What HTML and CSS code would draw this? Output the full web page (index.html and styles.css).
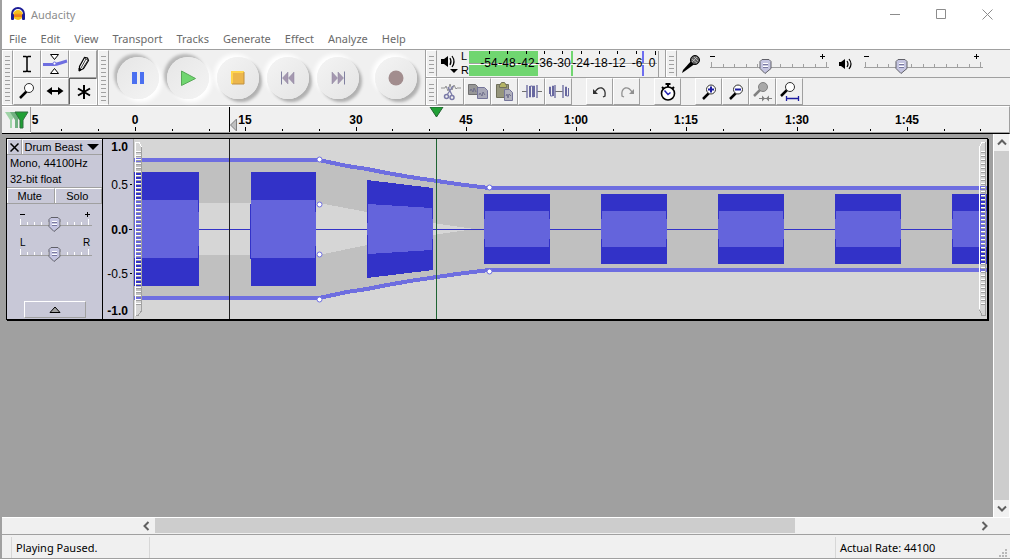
FILE: index.html
```html
<!DOCTYPE html>
<html lang="en">

<head>
    <meta charset="UTF-8">
    <meta name="viewport" content="width=device-width, initial-scale=1.0">
    <title>Audacity</title>
    <link rel="stylesheet" href="styles.css">
</head>

<body>
    <header class="titlebar">
        <svg class="logo" width="16" height="16" viewBox="0 0 16 16">
            <circle cx="8" cy="9" r="5" fill="#f7c21c" />
            <path d="M3 9l1-1 1 1 1-2 1 2 1-2 1 2 1-2 1 2 1-1 1 1v2H3z" fill="#f0801c" />
            <path d="M2 10V8a6 6 0 0 1 12 0v2" fill="none" stroke="#1c1c96" stroke-width="2" />
            <rect x="1" y="8" width="3" height="6" rx="1" fill="#1c1c96" />
            <rect x="12" y="8" width="3" height="6" rx="1" fill="#1c1c96" />
        </svg>
        <span class="title">Audacity</span>
        <div class="window-buttons">
            <button aria-label="Minimize"><svg width="11" height="11"><path d="M0 5.500h10" /></svg></button>
            <button aria-label="Maximize"><svg width="11" height="11"><path d="M.5.5h9v9h-9z" /></svg></button>
            <button aria-label="Close"><svg width="11" height="11"><path d="M.5.5l10 10M10.500.5l-10 10" /></svg></button>
        </div>
    </header>

    <nav class="menu">
        <a href="#">File</a>
        <a href="#">Edit</a>
        <a href="#">View</a>
        <a href="#">Transport</a>
        <a href="#">Tracks</a>
        <a href="#">Generate</a>
        <a href="#">Effect</a>
        <a href="#">Analyze</a>
        <a href="#">Help</a>
    </nav>

    <div class="toolbars">
        <!-- Tools -->
        <div class="toolbar tools">
            <div class="grabber"></div>
            <div class="tool-grid">
                <button class="tool" aria-label="Selection tool"><svg width="20" height="20"><path d="M6 2.500h3l1 1 1-1h3M6 17.500h3l1-1 1 1h3M10 3v14" fill="none" stroke="#000" stroke-width="1.500" /></svg></button>
                <button class="tool" aria-label="Envelope tool"><svg width="26" height="22"><path d="M1 11.500h10c5 0 8-2 14-3.500" fill="none" stroke="#6e6ee0" stroke-width="3" /><path d="M8.500 1.500h8l-4 5zM8.500 20.500h8l-4-5z" fill="#fff" stroke="#000" /><circle cx="12.500" cy="10.500" r="1.500" fill="#fff" stroke="#6e6ee0" /></svg></button>
                <button class="tool" aria-label="Draw tool"><svg width="20" height="20"><path d="M6.500 16.500v-4l5-9 3 .5 1 2.500-5 8z" fill="#fff" stroke="#000" stroke-width="1.200" /><path d="M6 17v-3l2.500 1.500z" stroke="#000" /><path d="M8 14l5-9M10 14l5-8M11 4l4 2" stroke="#404040" /></svg></button>
                <button class="tool" aria-label="Zoom tool"><svg width="20" height="20"><path d="M3 17l7-7" stroke="#000" stroke-width="2.500" /><circle cx="12" cy="7" r="4.500" fill="#fff" stroke="#303030" /></svg></button>
                <button class="tool" aria-label="Time shift tool"><svg width="20" height="20"><path d="M4 10h12" stroke="#000" stroke-width="2" /><path d="M1.500 10L7 6v8zM18.500 10L13 6v8z" /></svg></button>
                <button class="tool pressed" aria-label="Multi tool"><svg width="22" height="22"><path d="M12 5v14M6 8.500l12 7M6 15.500l12-7" stroke="#000" stroke-width="2" /></svg></button>
            </div>
        </div>

        <!-- Transport -->
        <div class="toolbar transport">
            <div class="grabber"></div>
            <div class="transport-buttons">
                <button class="round down" aria-label="Pause"><svg width="16" height="16"><path d="M2 2h5v12H2zM10 2h4v12h-4z" fill="#4b70f0" /></svg></button>
                <button class="round down" aria-label="Play"><svg width="16" height="16"><path d="M1.500 1l14 7.500-14 7z" fill="#70d670" stroke="#58a858" /></svg></button>
                <button class="round" aria-label="Stop"><svg width="16" height="16"><path d="M2 2h12v12H2z" fill="#ecb64c" /><path d="M2 14V2h12" fill="none" stroke="#ffd54d" stroke-width="2" /><path d="M14 2v12H2" fill="none" stroke="#c09040" /></svg></button>
                <button class="round" aria-label="Skip to start"><svg width="16" height="16"><path d="M8 2v12L2.500 8zM14 2v12L8.500 8z" fill="#a598b0" stroke="#8d86a0" stroke-width=".5" /><path d="M1.500 1.500v13" stroke="#8080a0" /></svg></button>
                <button class="round" aria-label="Skip to end"><svg width="16" height="16"><path d="M2 2v12l5.500-6zM8 2v12l5.500-6z" fill="#a598b0" stroke="#8d86a0" stroke-width=".5" /><path d="M14.500 1.500v13" stroke="#8080a0" /></svg></button>
                <button class="round record" aria-label="Record"><svg width="16" height="16"><circle cx="8" cy="8" r="7.500" fill="#a28d8e" /></svg></button>
            </div>
        </div>

        <div class="stack">
            <div class="stack-row">
                <!-- Meter -->
                <div class="toolbar meter">
                    <div class="grabber"></div>
                    <button class="meter-menu" aria-label="Playback meter">
                        <svg width="18" height="22"><path d="M0 6h3l4-3v11l-4-3H0z" /><path d="M9 5q2 3.500 0 7M11 3q4 5.500 0 11" fill="none" stroke="#000" stroke-width="1.200" /><path d="M9 16h8l-4 4z" /></svg>
                    </button>
                    <div class="channels"><span>L</span><span>R</span></div>
                    <svg class="meter-scale" width="192" height="26">
                        <rect width="69" height="25" fill="#70d670" />
                        <path d="M103 0v25" stroke="#70d670" stroke-width="2" />
                        <path d="M174 0v25" stroke="#6e6ef0" stroke-width="2" />
                        <path d="M0 12.500h188" stroke="#a0a0a0" />
                        <path d="M0 13.500h188" stroke="#fff" />
                        <path d="M20.500 0v3M38.500 0v3M57.500 0v3M75.500 0v3M93.500 0v3M112.500 0v3M130.500 0v3M148.500 0v3M167.500 0v3M186.500 0v4" stroke="#000" />
                        <path d="M189.500 0v26" stroke="#a0a0a0" />
                        <g class="scale-text">
                            <text x="20" y="16">-54</text>
                            <text x="38" y="16">-48</text>
                            <text x="57" y="16">-42</text>
                            <text x="75" y="16">-36</text>
                            <text x="93" y="16">-30</text>
                            <text x="112" y="16">-24</text>
                            <text x="130" y="16">-18</text>
                            <text x="148" y="16">-12</text>
                            <text x="168" y="16">-6</text>
                            <text x="183" y="16">0</text>
                        </g>
                    </svg>
                </div>

                <!-- Mixer -->
                <div class="toolbar mixer">
                    <div class="grabber"></div>
                    <label class="mixer-icon" for="recVolume"><svg width="20" height="20"><path d="M1 19l1-3 9-10 4 3-11 8z" /><circle cx="14" cy="6" r="4.500" fill="#606060" stroke="#000" /><path d="M11 5l5 4M13 3l4 4M11 8l5-5" stroke="#d0d0d0" stroke-width=".7" /></svg></label>
                    <div class="slider">
                        <svg width="128" height="25"><path d="M5 6.500h5M115 6.500h5M117.500 4v5" stroke="#000" /><path d="M5 17.500h119M6.500 12v5M121.500 12v5M18.500 14v3M29.500 14v3M41.500 14v3M52.500 14v3M64.500 14v3M75.500 14v3M87.500 14v3M98.500 14v3M110.500 14v3" stroke="#a0a0a0" /></svg>
                        <input type="range" id="recVolume" min="0" max="100" value="47">
                    </div>
                    <label class="mixer-icon speaker" for="playVolume"><svg width="14" height="14"><path d="M0 5h2l4-3v10L2 9H0z" /><path d="M8 4q2 3 0 6M10 2q4 5 0 10" fill="none" stroke="#000" stroke-width="1.200" /></svg></label>
                    <div class="slider">
                        <svg width="128" height="25"><path d="M5 6.500h5M115 6.500h5M117.500 4v5" stroke="#000" /><path d="M5 17.500h119M6.500 12v5M121.500 12v5M18.500 14v3M29.500 14v3M41.500 14v3M52.500 14v3M64.500 14v3M75.500 14v3M87.500 14v3M98.500 14v3M110.500 14v3" stroke="#a0a0a0" /></svg>
                        <input type="range" id="playVolume" min="0" max="100" value="31">
                    </div>
                </div>
            </div>

            <!-- Edit -->
            <div class="toolbar edit">
                <div class="grabber"></div>
                <div class="group">
                    <button class="tool" aria-label="Cut"><svg width="22" height="20"><path d="M1 6h4l1-2 2 5 2-7 2 6 2-5 2 4 1-1h4" fill="none" stroke="#909090" /><path d="M7 13l6-9M12 13L8 5" stroke="#7a7aa8" stroke-width="1.300" /><circle cx="6.500" cy="14.500" r="2" fill="none" stroke="#7a7aa8" stroke-width="1.500" /><circle cx="12" cy="15.500" r="2" fill="none" stroke="#7a7aa8" stroke-width="1.500" /></svg></button>
                    <button class="tool" aria-label="Copy"><svg width="22" height="20"><path d="M1.500 2.500h7l2 2v8h-9z" fill="#969696" stroke="#707070" /><path d="M10.500 5.500h7l3 3v8h-10z" fill="#a8a8b8" stroke="#74749a" /><path d="M3 9l1-2 2 3 1-4 2 4M12 13l1-2 2 3 1-4 2 3" fill="none" stroke="#70708c" /></svg></button>
                    <button class="tool" aria-label="Paste"><svg width="22" height="20"><path d="M2.500 2.500h12v13h-12z" fill="#96967c" stroke="#70705a" /><path d="M5.500 3.500l2-3h3l2 3v2h-7z" fill="#b4b464" stroke="#70705a" /><path d="M10.500 7.500h5l3 3v8h-8z" fill="#b0b0bc" stroke="#74749a" /><path d="M12 14l1-2 1 4 1-4 2 2" fill="none" stroke="#70708c" /></svg></button>
                    <button class="tool" aria-label="Trim"><svg width="22" height="20"><path d="M1 9.500h5M16 9.500h5" stroke="#707070" /><path d="M6 3v13M16 3v13" stroke="#7a7aa8" stroke-width="1.500" /><path d="M8.500 4v11l1 0V4h2v11h1V4h1v11" fill="none" stroke="#6868a0" /></svg></button>
                    <button class="tool" aria-label="Silence"><svg width="22" height="20"><path d="M7 9.500h8" stroke="#707070" /><path d="M7 3v13M15 3v13" stroke="#7a7aa8" stroke-width="1.500" /><path d="M1.500 12V5h1v9h2V4h1v10M17.500 14V5h1v9h2V6" fill="none" stroke="#6868a0" /></svg></button>
                </div>
                <div class="group">
                    <button class="tool" aria-label="Undo"><svg width="20" height="20"><path d="M5 10q3-5 7-4 4 2 3 8l-2 1" fill="none" stroke="#303030" stroke-width="1.300" /><path d="M3 7v5h5z" fill="#303030" /></svg></button>
                    <button class="tool" aria-label="Redo"><svg width="20" height="20"><path d="M15 10q-3-5-7-4-4 2-3 8l2 1" fill="none" stroke="#909090" stroke-width="1.300" /><path d="M17 7v5h-5z" fill="#909090" /></svg></button>
                </div>
                <div class="group">
                    <button class="tool" aria-label="Timer record"><svg width="20" height="20"><circle cx="10" cy="11.500" r="6.500" fill="#fff" stroke="#000" stroke-width="1.600" /><path d="M7.500 2h5M10 2v3M4 5l2 2M16 5l-2 2" stroke="#000" stroke-width="2" /><path d="M6.500 8.500l3.500 4 2.500-2" fill="none" stroke="#2020b0" stroke-width="1.500" /></svg></button>
                </div>
                <div class="group">
                    <button class="tool" aria-label="Zoom in"><svg width="20" height="20"><path d="M4 17l6-6" stroke="#000" stroke-width="2.500" /><circle cx="12" cy="7.500" r="4.500" fill="#fff" stroke="#303030" /><path d="M9 7.500h6M12 4.500v6" stroke="#1c1ca0" stroke-width="2" /></svg></button>
                    <button class="tool" aria-label="Zoom out"><svg width="20" height="20"><path d="M4 17l6-6" stroke="#000" stroke-width="2.500" /><circle cx="12" cy="7.500" r="4.500" fill="#fff" stroke="#303030" /><path d="M9 7.500h6" stroke="#1c1ca0" stroke-width="2" /></svg></button>
                    <button class="tool" aria-label="Fit selection"><svg width="20" height="22"><path d="M1 15l6-6" stroke="#808080" stroke-width="2.500" /><circle cx="10" cy="6" r="4.500" fill="#a8a8a8" stroke="#808080" /><path d="M6 17.500h13" stroke="#808080" /><path d="M12 17.500l-3-3v6zM13 17.500l3-3v6z" fill="#808080" /></svg></button>
                    <button class="tool" aria-label="Fit project"><svg width="20" height="22"><path d="M1 15l6-6" stroke="#000" stroke-width="2.500" /><circle cx="10" cy="6" r="4.500" fill="#fff" stroke="#303030" /><path d="M6.500 15v5M18.500 15v5M7 17.500h11" stroke="#1c1ca0" stroke-width="1.300" /></svg></button>
                </div>
            </div>
        </div>
    </div>

    <!-- Timeline -->
    <div class="timeline">
        <button class="pin" aria-label="Pin play head"><svg width="25" height="18"><path d="M1 1h12l-5 8v8H6V9z" fill="#a0d4a8" /><path d="M6 1h13l-5 8v8h-3V9z" fill="#70b080" /><path d="M11 1h13l-5 8v8h-3V9z" fill="#20a035" stroke="#307040" /></svg></button>
        <svg class="ruler" width="100%" height="26">
            <g class="ruler-text">
                <text x="4" y="17">5</text>
                <text x="104" y="17">0</text>
                <text x="214" y="17">15</text>
                <text x="325" y="17">30</text>
                <text x="435" y="17">45</text>
                <text x="545" y="17">1:00</text>
                <text x="655" y="17">1:15</text>
                <text x="766" y="17">1:30</text>
                <text x="876" y="17">1:45</text>
            </g>
            <path d="M104.500 20v4M214.500 20v4M325.500 20v4M435.500 20v4M545.500 20v4M655.500 20v4M766.500 20v4M876.500 20v4" stroke="#000" />
            <path d="M30.500 22v2M67.500 22v2M141.500 22v2M178.500 22v2M251.500 22v2M288.500 22v2M361.500 22v2M398.500 22v2M472.500 22v2M508.500 22v2M582.500 22v2M619.500 22v2M692.500 22v2M729.500 22v2M802.500 22v2M839.500 22v2M913.500 22v2M949.500 22v2" stroke="#000" />
            <path d="M198.500 0v26" stroke="#000" />
            <path d="M205.500 12v12l-6-6z" fill="#c0c0c0" stroke="#808080" />
            <path d="M399 0h13l-6.500 10z" fill="#20a035" stroke="#206030" />
        </svg>
    </div>

    <main class="workspace">
        <div class="track-area">
            <section class="track">
                <div class="panel">
                    <div class="panel-title">
                        <button class="close" aria-label="Close track"><svg width="9" height="9"><path d="M.5.5l8 8M8.500.5l-8 8" stroke="#000" stroke-width="1.500" /></svg></button>
                        <button class="name">Drum Beast<svg width="12" height="6"><path d="M0 0h12L6 6z" /></svg></button>
                    </div>
                    <div class="info">Mono, 44100Hz<br>32-bit float</div>
                    <div class="mute-solo"><button>Mute</button><button>Solo</button></div>
                    <div class="sliders">
                        <div class="slider small">
                            <svg width="78" height="26"><path d="M5 6.500h5M70 6.500h5M72.500 4v5" stroke="#000" /><path d="M5 17.500h72" stroke="#a0a0a0" /><path d="M5.500 11v6M12.500 14v3M19.500 14v3M26.500 14v3M33.500 14v3M45.500 14v3M52.500 14v3M59.500 14v3M66.500 14v3M73.500 11v6" stroke="#fff" /></svg>
                            <input type="range" aria-label="Gain" min="-36" max="36" value="0">
                        </div>
                        <div class="slider small">
                            <svg width="78" height="30"><g class="pan-text"><text x="5" y="12">L</text><text x="68" y="12">R</text></g><path d="M5 21.500h72" stroke="#a0a0a0" /><path d="M5.500 15v6M12.500 18v3M19.500 18v3M26.500 18v3M33.500 18v3M45.500 18v3M52.500 18v3M59.500 18v3M66.500 18v3M73.500 15v6" stroke="#fff" /></svg>
                            <input class="pan" type="range" aria-label="Pan" min="-100" max="100" value="0">
                        </div>
                    </div>
                    <button class="collapse" aria-label="Collapse track"><svg width="12" height="7"><path d="M1 6.500h10L6 1z" fill="#a0a0a0" stroke="#000" /></svg></button>
                </div>
                <svg class="vruler" width="31" height="180">
                    <text class="strong" x="25" y="12">1.0</text>
                    <text x="25" y="50">0.5</text>
                    <text class="strong" x="25" y="95">0.0</text>
                    <text x="25" y="139">-0.5</text>
                    <text class="strong" x="25" y="176">-1.0</text>
                    <path d="M27 45.500h2M26 90.500h3M27 134.500h2" stroke="#000" />
                    <path d="M30.500 0v180" stroke="#a0a0a0" />
                </svg>
                <svg class="wave" width="100%" height="180" shape-rendering="crispEdges">
                    <defs>
                        <pattern id="ribs" width="5" height="4" patternUnits="userSpaceOnUse">
                            <rect width="5" height="1" fill="#fff" />
                            <rect y="1" width="5" height="1" fill="#a0a0a0" />
                        </pattern>
                    </defs>
                    <!-- area inside the envelope -->
                    <path d="M0 21H185L213 27 233 30 253 34 276 38 303 42 323 45 355 49H1200V131H355L323 135 303 138 276 142 253 146 233 150 213 153 185 159H0z" fill="#c0c0c0" />
                    <path d="M0 64H185L233 73 299 84 340 90 299 96 233 106 185 116H0z" fill="#d6d6d6" />
                    <path d="M0 90.500H1200" stroke="#3232c8" />
                    <g fill="#3232c8">
                        <path d="M0 33h65v114H0z" />
                        <path d="M117 33h65v114h-65zM116 65h1v55h-1z" />
                        <path d="M233 41L299 49V131L233 139z" />
                        <path d="M350 55h66v70h-66zM467 55h66v70h-66zM584 55h66v70h-66zM701 55h66v70h-66zM818 55h66v70h-66z" />
                    </g>
                    <g fill="#6464dc">
                        <path d="M0 61h64v58H0zM64 73h1v34h-1z" />
                        <path d="M117 61h64v58h-64zM181 73h1v34h-1z" />
                        <path d="M234 65L298 69V111L234 115zM233 84h1v12h-1zM298 80h1v20h-1z" />
                        <path d="M351 72h64v36h-64zM468 72h64v36h-64zM585 72h64v36h-64zM702 72h64v36h-64zM819 72h64v36h-64z" />
                        <path d="M350 80h66v20h-66zM467 80h66v20h-66zM584 80h66v20h-66zM701 80h66v20h-66zM818 80h66v20h-66z" />
                    </g>
                    <g fill="none" stroke="#6e6ee0" stroke-width="4">
                        <path d="M0 21H185L213 27 233 30 253 34 276 38 303 42 323 45 355 49H1200" />
                        <path d="M0 159H185L213 153 233 150 253 146 276 142 303 138 323 135 355 131H1200" />
                    </g>
                    <g fill="#fff" stroke="#6e6ee0" shape-rendering="auto">
                        <circle cx="185.500" cy="20.500" r="2.500" />
                        <circle cx="185.500" cy="65.500" r="2.500" />
                        <circle cx="185.500" cy="115.500" r="2.500" />
                        <circle cx="185.500" cy="160.500" r="2.500" />
                        <circle cx="355.500" cy="48.500" r="2.500" />
                        <circle cx="355.500" cy="132.500" r="2.500" />
                    </g>
                    <path d="M95.500 0v180" stroke="#202020" />
                    <path d="M302.500 0v180" stroke="#1e6432" />
                    <!-- clip drag handles -->
                    <rect x="2" y="12" width="5" height="154" fill="url(#ribs)" />
                    <path d="M1.500 177V3.500H5L7.500 8" fill="none" stroke="#fff" />
                    <path d="M7.500 8V172L4 176.500H2" fill="none" stroke="#a0a0a0" />
                    <rect x="847" y="12" width="4" height="154" fill="url(#ribs)" />
                    <path d="M845.500 170V8L848 3.500H851" fill="none" stroke="#fff" />
                    <path d="M851.500 3V176.500H848L845.500 171" fill="none" stroke="#a0a0a0" />
                </svg>
            </section>
        </div>
        <div class="vscroll">
            <button aria-label="Scroll up"><svg width="10" height="7"><path d="M1 5.500l4-4 4 4" /></svg></button>
            <div class="thumb"></div>
            <button aria-label="Scroll down"><svg width="10" height="7"><path d="M1 1.500l4 4 4-4" /></svg></button>
        </div>
    </main>

    <div class="hscroll">
        <button aria-label="Scroll left"><svg width="7" height="10"><path d="M5.500 1l-4 4 4 4" /></svg></button>
        <div class="rail"><div class="thumb"></div></div>
        <button aria-label="Scroll right"><svg width="7" height="10"><path d="M1.500 1l4 4-4 4" /></svg></button>
    </div>

    <footer class="statusbar">
        <div class="state">Playing Paused.</div>
        <div class="message"></div>
        <div class="rate">Actual Rate: 44100</div>
        <svg class="grip" width="9" height="9"><path d="M6 0h2v2H6zM3 3h2v2H3zM6 3h2v2H6zM0 6h2v2H0zM3 6h2v2H3zM6 6h2v2H6z" fill="#b8b8b8" /></svg>
    </footer>
</body>

</html>
```
FILE: styles.css
```css
* {
    box-sizing: border-box;
}

body {
    margin: 0;
    height: 100vh;
    display: flex;
    flex-direction: column;
    overflow: hidden;
    border-left: 2px solid #a0a0a0;
    background-color: #f0f0f0;
    font-family: "Liberation Sans", Arial, sans-serif;
    font-size: 12px;
    color: #000;
}

button {
    margin: 0;
    padding: 0;
    border: 0;
    background: none;
    font: inherit;
    color: inherit;
    display: flex;
    align-items: center;
    justify-content: center;
}

svg {
    display: block;
    flex: none;
}

/* title and menu */

.titlebar {
    flex: none;
    display: flex;
    align-items: center;
    height: 28px;
    padding-left: 8px;
    background-color: #fff;
    font-family: "Noto Sans", sans-serif;
    font-size: 11px;
    color: #8c8c8c;
}

.title {
    flex: 1;
    padding-left: 5px;
}

.window-buttons {
    display: flex;
}

.window-buttons button {
    width: 46px;
    height: 26px;
}

.window-buttons path {
    fill: none;
    stroke: #8c8c8c;
}

.menu {
    flex: none;
    display: flex;
    align-items: center;
    gap: 14px;
    height: 21px;
    padding-left: 7px;
    background-color: #fff;
    font-family: "Noto Sans", sans-serif;
    font-size: 11px;
}

.menu a {
    color: #6a6a6a;
    text-decoration: none;
}

/* toolbars */

.toolbars {
    flex: none;
    display: flex;
    height: 57px;
    border-top: 1px solid #a0a0a0;
    border-bottom: 1px solid #a0a0a0;
}

.toolbar {
    display: flex;
}

.grabber {
    flex: none;
    width: 11px;
    border: 1px solid #fff;
    border-right-color: #a0a0a0;
    background: repeating-linear-gradient(#f0f0f0 0 3px, #a0a0a0 3px 4px) content-box;
    padding: 2px;
}

.tool-grid {
    display: grid;
    grid-template-columns: repeat(3, 28px);
}

.tool {
    border: 1px solid #a0a0a0;
    border-top-color: #fff;
    border-left-color: #fff;
}

.tool.pressed {
    border-color: #606060 #fff #fff #606060;
}

.transport {
    border-left: 1px solid #a0a0a0;
}

.transport-buttons {
    display: flex;
    align-items: center;
    gap: 8px;
    padding: 0 8px;
}

.round {
    width: 42px;
    height: 42px;
    border-radius: 50%;
    background: linear-gradient(135deg, #f4f4f4, #e4e4e4);
    box-shadow: 3px 3px 3px #b0b0b0, -3px -3px 4px #fff;
}

.round.down {
    background: linear-gradient(135deg, #e6e6e6, #f4f4f4);
    box-shadow: -3px -3px 3px #b8b8b8, 3px 3px 4px #fff;
}

.round.record {
    margin-left: 8px;
}

.stack {
    flex: 1;
    min-width: 0;
    border-left: 1px solid #a0a0a0;
}

.stack-row {
    display: flex;
    height: 28px;
    border-bottom: 1px solid #a0a0a0;
}

.meter-menu {
    width: 18px;
    margin: 0 2px 0 4px;
}

.channels {
    display: flex;
    flex-direction: column;
    justify-content: space-between;
    width: 8px;
    font-size: 11px;
    line-height: 13px;
}

.meter-scale {
    margin-top: 1px;
}

.scale-text {
    font-size: 12px;
    text-anchor: middle;
}

.mixer {
    flex: 1;
    border-left: 1px solid #a0a0a0;
    margin-left: 4px;
}

.mixer-icon {
    display: flex;
    align-items: center;
    justify-content: center;
    width: 28px;
}

.mixer-icon.speaker {
    width: 26px;
}

.slider {
    display: grid;
}

.slider > * {
    grid-area: 1 / 1;
}

.slider input {
    -webkit-appearance: none;
    appearance: none;
    width: 128px;
    height: 16px;
    margin: 8px 0 0;
    background: none;
}

.slider input::-webkit-slider-thumb {
    -webkit-appearance: none;
    width: 13px;
    height: 15px;
    background: url("data:image/svg+xml,%3Csvg xmlns='http://www.w3.org/2000/svg' width='13' height='15'%3E%3Cpath d='M3 .5h7l2 2v7l-6 5-5-5v-7z' fill='%23c4c4e0' stroke='%23606068'/%3E%3Cpath d='M4 4.500h5M4 7.500h5' stroke='%23fff'/%3E%3Cpath d='M4 5.500h5M4 8.500h5' stroke='%237878a0'/%3E%3C/svg%3E") no-repeat;
}

.edit {
    gap: 14px;
    height: 27px;
}

.edit .grabber {
    margin-right: -14px;
}

.group {
    display: flex;
}

.group .tool {
    width: 27px;
}

/* timeline */

.timeline {
    flex: none;
    display: flex;
    height: 28px;
    border-top: 1px solid #fff;
    border-right: 1px solid #a0a0a0;
    border-bottom: 1px solid #000;
}

.pin {
    flex: none;
    width: 29px;
    height: 25px;
    border-right: 1px solid #a0a0a0;
}

.ruler {
    flex: 1;
    min-width: 0;
    border-bottom: 1px solid #a0a0a0;
}

.ruler-text {
    font-size: 12px;
    font-weight: bold;
    text-anchor: middle;
}

/* track */

.workspace {
    flex: 1;
    min-height: 0;
    display: flex;
}

.track-area {
    flex: 1;
    min-width: 0;
    padding: 4px 5px 0 4px;
    background-color: #a0a0a0;
}

.track {
    display: flex;
    border: 1px solid #000;
    box-shadow: 1px 1px 0 #000;
}

.panel {
    flex: none;
    display: flex;
    flex-direction: column;
    width: 96px;
    border-right: 1px solid #000;
    background-color: #c8c8d7;
    font-size: 11px;
}

.panel-title,
.mute-solo {
    display: flex;
    height: 16px;
    border-bottom: 1px solid #a0a0a0;
}

.close {
    width: 15px;
    border-right: 1px solid #a0a0a0;
    border-left: 1px solid #fff;
    border-top: 1px solid #fff;
}

.name {
    flex: 1;
    gap: 4px;
    padding-right: 2px;
    border-left: 1px solid #fff;
    border-top: 1px solid #fff;
}

.info {
    height: 33px;
    padding-left: 3px;
    line-height: 16px;
    border-bottom: 1px solid #a0a0a0;
}

.mute-solo button {
    flex: 1;
    padding-right: 2px;
    border-top: 1px solid #fff;
    border-left: 1px solid #fff;
    border-right: 1px solid #a0a0a0;
}

.sliders {
    flex: 1;
    padding: 4px 0 0 8px;
}

.slider.small input {
    width: 78px;
    margin-top: 8px;
}

.slider.small .pan {
    margin-top: 12px;
}

.pan-text {
    font-size: 10px;
}

.collapse {
    align-self: center;
    width: 62px;
    height: 17px;
    margin-bottom: 1px;
    border: 1px solid #a0a0a0;
    border-top-color: #fff;
    border-left-color: #fff;
}

.vruler {
    background-color: #c8c8d7;
    font-size: 12px;
    text-anchor: end;
}

.strong {
    font-weight: bold;
}

.wave {
    flex: 1;
    min-width: 0;
    background-color: #d6d6d6;
}

/* scrollbars */

.vscroll {
    flex: none;
    display: flex;
    flex-direction: column;
    width: 17px;
    border-left: 1px solid #fff;
    border-right: 1px solid #fff;
}

.vscroll button {
    height: 17px;
}

.vscroll .thumb {
    flex: 1;
    background-color: #cdcdcd;
}

.vscroll path,
.hscroll path {
    fill: none;
    stroke: #606060;
    stroke-width: 2;
}

.hscroll {
    flex: none;
    display: flex;
    height: 17px;
    padding: 0 17px 0 136px;
    border-top: 1px solid #fff;
}

.hscroll button {
    width: 17px;
}

.rail {
    flex: 1;
}

.rail .thumb {
    width: 78%;
    height: 15px;
    background-color: #cdcdcd;
}

/* status */

.statusbar {
    flex: none;
    display: flex;
    height: 25px;
    padding: 2px 2px 0 9px;
    border-top: 1px solid #a0a0a0;
    border-bottom: 1px solid #a0a0a0;
    font-family: "Noto Sans", sans-serif;
    font-size: 11px;
    line-height: 22px;
}

.state {
    width: 139px;
    padding-left: 4px;
    border-left: 1px solid #d7d7d7;
    border-right: 1px solid #d7d7d7;
}

.message {
    flex: 1;
}

.rate {
    width: 164px;
    padding-left: 4px;
    border-left: 1px solid #d7d7d7;
}

.grip {
    align-self: flex-end;
}
```
